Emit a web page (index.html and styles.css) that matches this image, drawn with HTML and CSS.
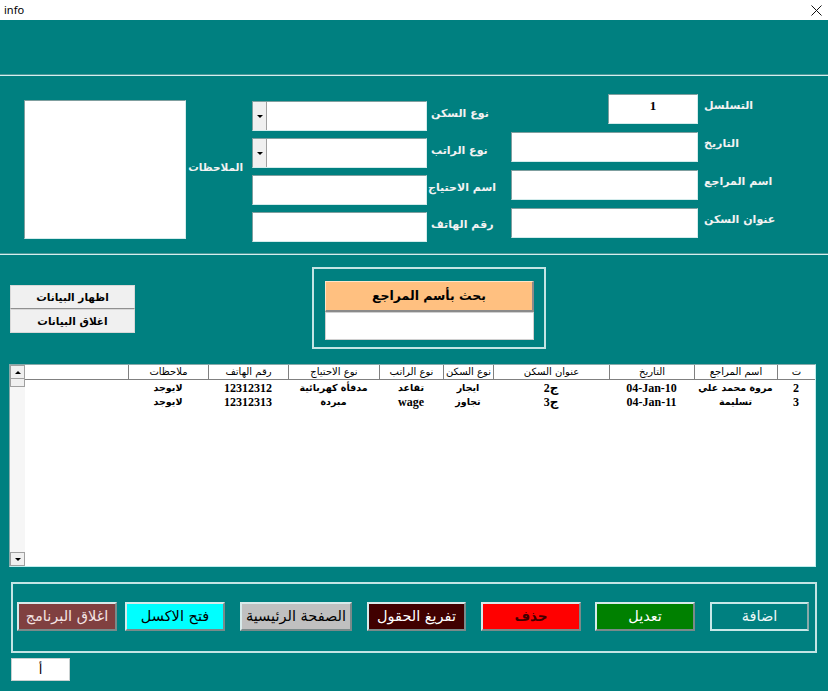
FILE: index.html
```html
<!DOCTYPE html>
<html lang="ar">
<head>
<meta charset="utf-8">
<title>info</title>
<link rel="stylesheet" href="styles.css">
</head>
<body>
<div class="titlebar">
  <span class="title">info</span>
  <svg class="close" width="11" height="11" viewBox="0 0 11 11"><path d="M0.5 0.5 L10.5 10.5 M10.5 0.5 L0.5 10.5" stroke="#111" stroke-width="1" fill="none"/></svg>
</div>
<div class="banner"></div>
<div class="sep"></div>
<div class="fields">
  <div class="notes"></div>
  <div class="lbl notes-lbl" dir="rtl">الملاحظات</div>
  <div class="col mid">
    <div class="row"><div class="input combo"><span class="drop"></span></div><div class="lbl">نوع السكن</div></div>
    <div class="row"><div class="input combo"><span class="drop"></span></div><div class="lbl">نوع الراتب</div></div>
    <div class="row"><div class="input"></div><div class="lbl tight">اسم الاحتياج</div></div>
    <div class="row"><div class="input"></div><div class="lbl">رقم الهاتف</div></div>
  </div>
  <div class="col right">
    <div class="row"><div class="input seq">1</div><div class="lbl">التسلسل</div></div>
    <div class="row"><div class="input"></div><div class="lbl">التاريخ</div></div>
    <div class="row"><div class="input"></div><div class="lbl">اسم المراجع</div></div>
    <div class="row"><div class="input"></div><div class="lbl">عنوان السكن</div></div>
  </div>
</div>
<div class="sep"></div>
<div class="lower">
  <div class="side-btns">
    <div class="sbtn">اظهار البيانات</div>
    <div class="sbtn">اغلاق البيانات</div>
  </div>
  <div class="search-frame">
    <div class="search-btn">بحث بأسم المراجع</div>
    <div class="search-input"></div>
  </div>
</div>
<div class="listbox">
  <div class="scrollbar">
    <div class="sb-btn sb-up"></div>
    <div class="sb-thumb"></div>
    <div class="sb-track"></div>
    <div class="sb-btn sb-down"></div>
  </div>
  <div class="table">
    <div class="grid thead">
      <div class="th first"></div>
      <div class="th">ملاحظات</div>
      <div class="th">رقم الهاتف</div>
      <div class="th">نوع الاحتياج</div>
      <div class="th">نوع الراتب</div>
      <div class="th">نوع السكن</div>
      <div class="th">عنوان السكن</div>
      <div class="th">التاريخ</div>
      <div class="th">اسم المراجع</div>
      <div class="th">ت</div>
    </div>
    <div class="grid trow">
      <div class="td"></div>
      <div class="td">لايوجد</div>
      <div class="td num">12312312</div>
      <div class="td">مدفأة كهربائية</div>
      <div class="td">تقاعد</div>
      <div class="td">ايجار</div>
      <div class="td num">2ج</div>
      <div class="td num">04-Jan-10</div>
      <div class="td">مروة محمد علي</div>
      <div class="td num">2</div>
    </div>
    <div class="grid trow">
      <div class="td"></div>
      <div class="td">لايوجد</div>
      <div class="td num">12312313</div>
      <div class="td">مبردة</div>
      <div class="td num">wage</div>
      <div class="td">تجاوز</div>
      <div class="td num">3ج</div>
      <div class="td num">04-Jan-11</div>
      <div class="td">تسليمة</div>
      <div class="td num">3</div>
    </div>
  </div>
</div>
<div class="actions">
  <div class="abtn b-exit">اغلاق البرنامج</div>
  <div class="abtn b-excel">فتح الاكسل</div>
  <div class="abtn b-home">الصفحة الرئيسية</div>
  <div class="abtn b-clear">تفريغ الحقول</div>
  <div class="abtn b-del">حذف</div>
  <div class="abtn b-edit">تعديل</div>
  <div class="abtn b-add">اضافة</div>
</div>
<div class="status-input">أ</div>
</body>
</html>
```
FILE: styles.css
```css
* { box-sizing: border-box; margin: 0; padding: 0; }
html, body { width: 828px; height: 691px; overflow: hidden; }
body { background: #008080; font-family: "DejaVu Sans", sans-serif; color: #000; }

.titlebar { height: 20px; background: #fff; display: flex; align-items: center; justify-content: space-between; padding: 0 6px 0 4px; }
.title { font-family: "Noto Sans", "DejaVu Sans", sans-serif; font-size: 11px; line-height: 20px; }
.close { display: block; }

.banner { height: 54px; }
.sep { height: 2px; border-top: 1px solid #4f9a9a; border-bottom: 1px solid #d4eeee; }

.fields { height: 177px; display: flex; align-items: flex-start; }
.notes { margin: 24px 0 0 24px; width: 162px; height: 139px; background: #fff; border: 1px solid; border-color: #7f9f9f #d4ecec #d4ecec #7f9f9f; flex: none; }
.lbl { font-weight: bold; font-size: 11px; line-height: 16px; color: #f2f2f2; white-space: nowrap; }
.notes-lbl { margin: 83px 0 0 5px; width: 52px; font-size: 10.5px; flex: none; }
.col { display: flex; flex-direction: column; }
.mid { margin: 25px 0 0 9px; gap: 7px; width: 253px; flex: none; }
.right { margin: 18px 0 0 6px; gap: 8px; }
.row { display: flex; height: 30px; }
.input { background: #fff; border: 1px solid; border-color: #7f9f9f #d4ecec #d4ecec #7f9f9f; height: 30px; flex: none; }
.mid .input { width: 175px; }
.mid .lbl { margin-left: 4px; padding-top: 5px; }
.mid .lbl.tight { margin-left: 1px; }
.right .input { width: 187px; }
.right .lbl { margin-left: 6px; padding-top: 4px; }
.right .input.seq { width: 90px; margin-left: 97px; font-family: "Liberation Serif", serif; font-weight: bold; font-size: 13px; text-align: center; line-height: 22px; color: #000; }
.combo { display: flex; }
.drop { width: 14px; height: 28px; background: #f0f0f0; border-right: 1px solid #a0a0a0; display: flex; align-items: center; justify-content: center; }
.drop::after { content: ""; border-left: 3px solid transparent; border-right: 3px solid transparent; border-top: 3px solid #000; }

.lower { height: 109px; display: flex; align-items: flex-start; }
.side-btns { margin: 30px 0 0 10px; width: 125px; display: flex; flex-direction: column; }
.sbtn { height: 24px; background: #f0f0f0; border: 1px solid #d8d8d8; font-weight: bold; font-size: 10.5px; line-height: 22px; text-align: center; }
.sbtn:first-child { border-bottom-color: #909090; }
.search-frame { margin: 12px 0 0 177px; width: 234px; height: 82px; border: 2px solid #c4e4e4; padding: 12px 0 0 11px; }
.search-btn { width: 209px; height: 31px; background: #ffc080; border-top: 1px solid #ffe4c8; border-left: 1px solid #ffe4c8; border-right: 2px solid #8a8a8a; border-bottom: 2px solid #8a8a8a; font-weight: bold; font-size: 12.5px; line-height: 27px; text-align: center; }
.search-input { width: 209px; height: 28px; background: #fff; border: 1px solid #d0d0d0; }

.listbox { margin-left: 9px; width: 807px; height: 203px; background: #fff; border: 1px solid; border-color: #8aa #c0eeee #c0eeee #8aa; display: flex; }
.scrollbar { width: 15px; display: flex; flex-direction: column; background: #f6f6f6; }
.sb-btn { height: 14px; background: #f0f0f0; border: 1px solid #a0a0a0; display: flex; align-items: center; justify-content: center; }
.sb-up::after { content: ""; border-left: 3px solid transparent; border-right: 3px solid transparent; border-bottom: 3px solid #000; }
.sb-down::after { content: ""; border-left: 3px solid transparent; border-right: 3px solid transparent; border-top: 3px solid #000; }
.sb-thumb { height: 8px; background: #f0f0f0; border: 1px solid #a0a0a0; border-top: 0; }
.sb-track { flex: 1; }
.table { flex: 1; }
.grid { display: grid; grid-template-columns: 103px 80px 80px 91px 64px 50px 116px 85px 83px 38px; }
.thead { height: 15px; border-bottom: 1px solid #808080; }
.th { border-left: 1px solid #808080; font-size: 10px; line-height: 14px; text-align: center; white-space: nowrap; overflow: hidden; }
.th.first { border-left: 0; }
.trow { height: 14px; }
.thead + .trow { margin-top: 1px; }
.td { font-size: 9.5px; font-weight: bold; line-height: 14px; text-align: center; white-space: nowrap; }
.td.num { font-family: "Liberation Serif", "DejaVu Sans", serif; font-size: 12px; }

.actions { margin: 15px 0 0 11px; width: 806px; height: 71px; border: 2px solid #c4e4e4; display: flex; padding: 18px 0 0 4px; }
.abtn { height: 29px; width: 100px; border: 2px solid; border-color: #d8eaea #7a8a8a #7a8a8a #d8eaea; font-size: 14.5px; line-height: 25px; text-align: center; white-space: nowrap; }
.b-exit { background: #804040; color: #f4e4e4; }
.b-excel { background: #00ffff; margin-left: 8px; }
.b-home { background: #c0c0c0; width: 112px; margin-left: 15px; }
.b-clear { background: #400000; color: #fff; width: 99px; margin-left: 15px; }
.b-del { background: #ff0000; color: #400000; margin-left: 15px; font-weight: bold; font-size: 13.5px; }
.b-edit { background: #008000; color: #fff; margin-left: 14px; }
.b-add { background: #008080; color: #f0f8f8; width: 99px; margin-left: 15px; border-color: #c8e8e8 #8aa #c8e8e8 #c8e8e8; }

.status-input { margin: 5px 0 0 11px; width: 59px; height: 23px; background: #fff; border: 1px solid #c8d0d0; text-align: center; font-size: 13px; line-height: 21px; }
```
